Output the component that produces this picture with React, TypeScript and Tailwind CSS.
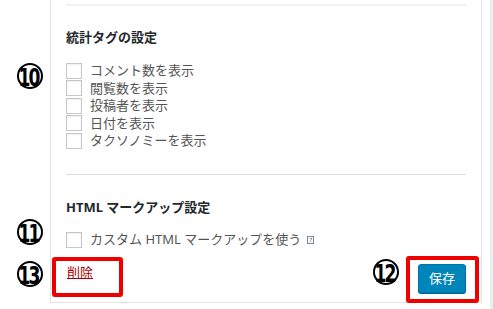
import React from 'react';

const jp = { fontFamily: '"Noto Sans", "Noto Sans CJK JP", sans-serif' };

const statItems = ['コメント数を表示', '閲覧数を表示', '投稿者を表示', '日付を表示', 'タクソノミーを表示'];

const Check = ({ label, children }: { label: string; children?: React.ReactNode }) => (
	<label className="flex items-center h-[17.5px] gap-[8px] text-[13px] leading-[17px] text-[#555]">
		<span className="w-[16px] h-[16px] shrink-0 border border-[#c4c8cc] bg-white shadow-[inset_0_1px_2px_rgba(0,0,0,0.07)]" />
		<span>{label}</span>
		{children}
	</label>
);

const Marker = ({ n, className }: { n: string; className: string }) => (
	<div
		className={`absolute w-[26px] h-[26px] rounded-full border-[2.5px] border-black bg-white flex items-center justify-center ${className}`}
	>
		<span
			className="text-[20px] font-bold leading-none text-black tracking-[-2px] scale-y-[1.25] scale-x-[0.95] pr-[2px] mt-[1px]"
			style={{ fontFamily: '"DejaVu Sans Condensed", "DejaVu Sans", sans-serif' }}
		>
			{n}
		</span>
	</div>
);

export default function App() {
	return (
		<div className="relative w-[493px] h-[309px] bg-white overflow-hidden flex" style={jp}>
			<div className="w-[50px] shrink-0" />
			<div className="w-[432px] h-[303px] shrink-0 flex flex-col border-x border-b border-[#e3e3e3] px-[15px]">
				<div className="mt-[4px] h-[2px] border-t border-[#f2f2f2] border-b border-[#dadada]" />
				<h3 className="mt-[22px] text-[13px] leading-[18px] font-bold text-[#23282d]">統計タグの設定</h3>
				<div className="mt-[16px] flex flex-col">
					{statItems.map(t => (
						<Check key={t} label={t} />
					))}
				</div>
				<div className="mt-[24.5px] h-px bg-[#dcdcdc]" />
				<h3 className="mt-[23px] text-[13px] leading-[18px] font-bold text-[#23282d]">HTML マークアップ設定</h3>
				<div className="mt-[15px]">
					<Check label="カスタム HTML マークアップを使う">
						<span className="ml-[-2px] w-[7px] h-[8px] border border-[#7a8a9a] text-[6px] leading-[6px] text-[#345] flex items-center justify-center">
							?
						</span>
					</Check>
				</div>
				<div className="mt-[15.5px] flex justify-between items-start">
					<a href="#" className="mt-[-1px] ml-[1px] text-[13px] leading-[18px] text-[#a00] underline">
						削除
					</a>
					<button className="w-[48px] h-[29px] rounded-[3px] bg-[#0085ba] border border-[#0073aa] shadow-[0_1px_0_#006799] text-white text-[13px] leading-none">
						保存
					</button>
				</div>
			</div>
			<div className="w-[8px] shrink-0" />
			<div className="w-[3px] shrink-0 bg-[#ededed]" />

			<Marker n="10" className="left-[17px] top-[63px]" />
			<Marker n="11" className="left-[17px] top-[219px]" />
			<Marker n="13" className="left-[17px] top-[261px]" />
			<Marker n="12" className="left-[373px] top-[259px]" />

			<div className="absolute left-[52px] top-[257px] w-[71px] h-[40px] border-[4px] border-[#ee0000] rounded-[3px]" />
			<div className="absolute left-[406px] top-[256px] w-[73px] h-[47px] border-[4px] border-[#ee0000] rounded-[3px]" />
		</div>
	);
}
